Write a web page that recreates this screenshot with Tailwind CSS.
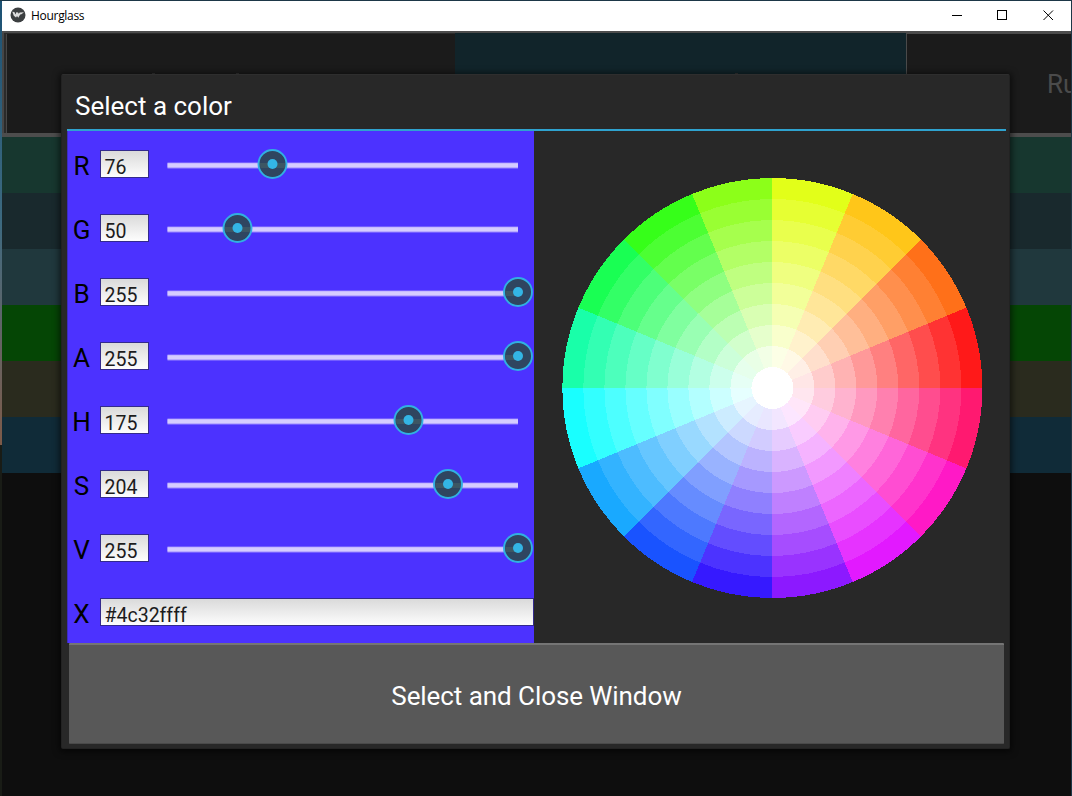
<!DOCTYPE html>
<html lang="en">
<head>
<meta charset="utf-8">
<title>Hourglass</title>
<script src="https://cdn.jsdelivr.net/npm/@tailwindcss/browser@4"></script>
</head>
<body class="h-[796px] w-[1072px] overflow-hidden bg-[#1d3747] font-['Roboto',sans-serif]">
<div class="flex h-full w-full pt-px">
  <div class="flex h-full w-[2px] shrink-0 flex-col">
    <div class="h-[444px] bg-linear-to-b from-[#1c5274] via-[#3d6a80] to-[#7d5a48]"></div>
    <div class="flex-1 bg-[#191c16]"></div>
  </div>
  <div class="relative flex h-full w-[1069px] shrink-0 flex-col bg-[#0e0e0e]">
    <header class="flex h-[30px] shrink-0 items-center bg-white pl-[8px]">
      <svg class="-mt-[2px] size-[16px]" viewBox="0 0 16 16"><circle cx="8" cy="8" r="7.5" fill="#3c3f41"/><path d="M2.3 4.8 4.4 5l1.1 2.6.8-2.4 1.8.3.6 1.2 1-1.2 4.3-.3-2.6 2-1.2.3-1.9 3.3-1.3-1.8-1 1.5-2.2-1.7z" fill="#dedede"/></svg>
      <h1 class="ml-[5px] font-['Open_Sans',sans-serif] text-[12px] tracking-[-0.3px] text-black">Hourglass</h1>
      <svg class="ml-auto mr-[16px] h-[12px] w-[104px] -mt-[2px]" viewBox="0 0 104 12" fill="none" stroke="#000" stroke-width="1">
        <path d="M1 6.5h10" /><rect x="46.5" y="1.5" width="9" height="9"/><path d="m92.5 1.5 9.5 9.5m0-9.5-9.5 9.5" />
      </svg>
    </header>
    <div class="flex h-[106px] shrink-0 border-t-2 border-b-4 border-[#4d4d4d] text-[26px]">
      <div class="w-[453px] border-l-[2px] border-[#464646]"><div class="h-full border-t border-l-2 border-[#2a2a2a] bg-[#1b1b1b]"><div class="h-full border-l border-[#464646]"></div></div></div>
      <div class="w-[451px] bg-[#11242a]"></div>
      <div class="flex h-full flex-1 items-center overflow-hidden border-t border-l border-[#4a4a4a] bg-[#1b1b1b] pl-[140px] whitespace-nowrap text-[#4b4b4b]"><span class="pt-[1px]">Ru</span></div>
    </div>
    <div class="h-[56px] shrink-0 bg-[#17372f]"></div>
    <div class="h-[56px] shrink-0 bg-[#19292d]"></div>
    <div class="h-[56px] shrink-0 bg-[#20383d]"></div>
    <div class="h-[56px] shrink-0 bg-[#054605]"></div>
    <div class="h-[56px] shrink-0 bg-[#2a2b1e]"></div>
    <div class="h-[56px] shrink-0 bg-[#102b38]"></div>

    <div class="absolute top-[72px] left-[150px] h-px w-[3px] bg-[#343434]"></div>
    <div class="absolute top-[72px] left-[234px] h-px w-[3px] bg-[#343434]"></div>
    <div class="absolute top-[72px] left-[733px] h-px w-[3px] bg-[#343434]"></div>
    <section class="absolute top-[73px] left-[59px] flex h-[675px] w-[949px] flex-col rounded-[2px] border border-[#222] border-t-[#2e2e2e] bg-[#282828] px-[6px] shadow-[0_1px_6px_2px_rgba(0,0,0,0.55)]">
      <h2 class="-ml-px flex h-[56px] w-[939px] shrink-0 items-center border-b-2 border-[#2fa3cf] pt-[8px] pl-[8px] text-[26px] text-white">Select a color</h2>
      <div class="flex h-[512px] shrink-0">
        <div class="-ml-px w-[467px] border-l border-[#3d2cc0] bg-[#4c32ff] pl-px text-black" id="rows"></div>
        <div class="flex flex-1 pt-[46px]">
          <svg id="wheel" class="ml-[28px] h-[422px] w-[422px]" viewBox="-210.4 -211 422 422" shape-rendering="crispEdges"></svg>
        </div>
      </div>
      <button class="ml-px h-[101px] w-[935px] shrink-0 rounded-[1px] border-t-2 border-b border-[#4a4a4a] border-t-[#757575] bg-[#585858] pt-[4px] text-[26px] tracking-[-0.07px] text-white">Select and Close Window</button>
    </section>
  </div>
</div>
<script>
const rows = [['R','76',105],['G','50',70],['B','255',350.5],['A','255',350.5],['H','175',241],['S','204',280.5],['V','255',350.5]];
const box = 'flex h-[28px] items-center border border-[#332a8c] bg-linear-to-b from-[#dadada] to-[#fdfdfd] pt-[8px] pb-px pl-[3.5px] text-[19.5px] leading-[20px] text-[#1c1c1c]';
const name = '-ml-[3px] mr-[3px] w-[31px] pt-[2px] text-center text-[26px] leading-[28px]';
let html = '';
for (const [label, value, pos] of rows) {
  html += `<div class="flex h-[64px] items-start pt-[19px]">
    <span class="${name}">${label}</span>
    <span class="${box} w-[49px]">${value}</span>
    <svg class="ml-[3px] h-[32px] w-[382px] -mt-[2px] shrink-0" viewBox="0.5 0 382 32">
      <path d="M16 14.5h350.5v5.9h-350.5z" fill="#9a88ff"/><path d="M16 15.3h350.5v4.3h-350.5z" fill="#d5ccff"/>
      <g transform="translate(${16 + pos} 16)"><circle r="14" fill="#2f4560"/>
      <path d="M-13 -1H${pos > 340 ? 0 : 13}V4H-12z" fill="#3d5663"/>
      <circle r="14" fill="none" stroke="#31b0e2" stroke-width="1.9"/><circle r="5" fill="#33b5e5"/></g>
    </svg></div>`;
}
html += `<div class="flex h-[64px] items-start pt-[19px]"><span class="${name}">X</span><span class="${box} w-[434px]">#4c32ffff</span></div>`;
document.getElementById('rows').innerHTML = html;

// Colour wheel: 16 hues by 10 saturation rings
const rgb = (h, s) => {
  const f = n => { const k = (n + h / 60) % 6; return Math.round(255 * (1 - s * Math.max(0, Math.min(k, 4 - k, 1)))); };
  return `rgb(${f(5)},${f(3)},${f(1)})`;
};
let wheel = '';
for (let ring = 9; ring >= 1; ring--) {
  const r = 21 * (ring + 1);
  for (let i = 0; i < 16; i++) {
    const a = i * Math.PI / 8, b = (i + 1) * Math.PI / 8;
    wheel += `<path d="M0 0L${r * Math.cos(a)} ${-r * Math.sin(a)}A${r} ${r} 0 0 0 ${r * Math.cos(b)} ${-r * Math.sin(b)}z" fill="${rgb(i * 22.5, ring / 10)}"/>`;
  }
}
document.getElementById('wheel').innerHTML = wheel + '<circle r="21" fill="#fff"/>';
</script>
</body>
</html>
